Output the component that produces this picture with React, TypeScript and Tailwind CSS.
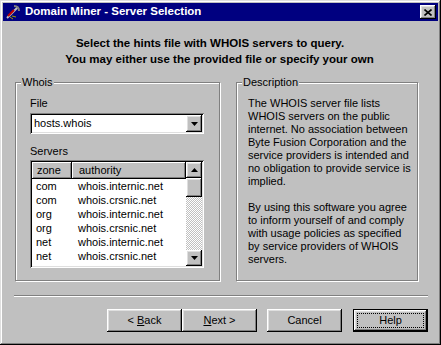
import React from 'react';

const raised =
  'shadow-[inset_-1px_-1px_#000,inset_1px_1px_#fff,inset_-2px_-2px_#808080,inset_2px_2px_#dfdfdf]';
const sunken =
  'shadow-[inset_1px_1px_#808080,inset_-1px_-1px_#fff,inset_2px_2px_#000,inset_-2px_-2px_#dfdfdf]';
const etched = 'border border-[#808080] shadow-[1px_1px_0_#fff,inset_1px_1px_0_#fff]';

const servers = [
  ['com', 'whois.internic.net'],
  ['com', 'whois.crsnic.net'],
  ['org', 'whois.internic.net'],
  ['org', 'whois.crsnic.net'],
  ['net', 'whois.internic.net'],
  ['net', 'whois.crsnic.net'],
  ['edu', 'whois.internic.net'],
];

const Arrow = ({ up }: { up?: boolean }) => (
  <svg width="7" height="4" viewBox="0 0 7 4" className={up ? 'rotate-180' : ''}>
    <path d="M0 0h7L3.5 4z" fill="#000" />
  </svg>
);

const Button = ({ children, isDefault }: { children: React.ReactNode; isDefault?: boolean }) =>
  isDefault ? (
    <div className="w-[75px] h-[23px] border border-black">
      <div className={`w-full h-full p-[3px] bg-[#c0c0c0] ${raised}`}>
        <div className="w-full h-full border border-dotted border-black flex items-center justify-center">
          {children}
        </div>
      </div>
    </div>
  ) : (
    <div className={`w-[75px] h-[23px] bg-[#c0c0c0] flex items-center justify-center ${raised}`}>
      {children}
    </div>
  );

const GroupBox = ({ title, className, children }: { title: string; className: string; children: React.ReactNode }) => (
  <div className={`relative h-[199px] ${etched} ${className}`}>
    <span className="absolute -top-[7px] left-[5px] px-[1px] bg-[#c0c0c0] leading-[13px]">{title}</span>
    {children}
  </div>
);

const App: React.FC = () => {
  return (
    <div className="w-[441px] h-[345px] bg-[#c0c0c0] p-[3px] flex flex-col font-['Liberation_Sans',Arial,sans-serif] text-[11px] text-black shadow-[inset_-1px_-1px_#000,inset_1px_1px_#dfdfdf,inset_-2px_-2px_#808080,inset_2px_2px_#fff] overflow-hidden">
      {/* Title bar */}
      <div className="h-[18px] bg-[#000080] flex items-center pl-[2px] pr-[2px] text-white font-bold text-[11.5px]">
        <svg width="16" height="16" viewBox="0 0 16 16" className="mr-[4px]">
          <path d="M2 14L13 3" stroke="#c0c0c0" strokeWidth="2" />
          <path d="M3 12L9 6" stroke="#c00000" strokeWidth="2" />
          <path d="M9 2c3 0 5 2 5 5" stroke="#808080" strokeWidth="2" fill="none" />
          <path d="M5 13l3 2M7 12l4 1" stroke="#a0a000" strokeWidth="1" />
        </svg>
        <span className="flex-1">Domain Miner - Server Selection</span>
        <div className={`w-[16px] h-[14px] bg-[#c0c0c0] flex items-center justify-center ${raised}`}>
          <svg width="8" height="7" viewBox="0 0 8 7">
            <path d="M0.5 0.5l7 6M7.5 0.5l-7 6" stroke="#000" strokeWidth="1.6" />
          </svg>
        </div>
      </div>

      {/* Header */}
      <div className="mt-[14px] text-center font-bold text-[11.5px] leading-[16px]">
        <div className="pr-[21px]">Select the hints file with WHOIS servers to query.</div>
        <div className="pr-[2px]">You may either use the provided file or specify your own</div>
      </div>

      {/* Groups */}
      <div className="mt-[15px] ml-[12px] flex gap-[16px]">
        <GroupBox title="Whois" className="w-[205px] pt-[14px] pl-[14px]">
          <div className="leading-[13px]">File</div>
          <div className={`mt-[3px] w-[174px] h-[21px] bg-white p-[2px] flex ${sunken}`}>
            <div className="flex-1 pl-[2px] leading-[17px]">hosts.whois</div>
            <div className={`w-[16px] h-[17px] bg-[#c0c0c0] flex items-center justify-center ${raised}`}>
              <Arrow />
            </div>
          </div>
          <div className="mt-[11px] leading-[13px]">Servers</div>
          <div className={`mt-[2px] w-[174px] h-[108px] bg-white p-[2px] flex ${sunken}`}>
            <div className="flex-1 overflow-hidden">
              <div className="flex h-[17px] leading-[17px]">
                <div className="w-[40px] bg-[#c0c0c0] pl-[5px] shadow-[inset_-1px_-1px_#000,inset_1px_1px_#fff,inset_-2px_-2px_#808080]">zone</div>
                <div className="flex-1 bg-[#c0c0c0] pl-[7px] shadow-[inset_-1px_-1px_#000,inset_1px_1px_#fff,inset_-2px_-2px_#808080]">authority</div>
              </div>
              {servers.map(([zone, auth], i) => (
                <div key={i} className="flex h-[14px] leading-[14px]">
                  <div className="w-[42px] pl-[4px]">{zone}</div>
                  <div className="pl-[4px]">{auth}</div>
                </div>
              ))}
            </div>
            <div className="w-[16px] flex flex-col bg-[repeating-conic-gradient(#c0c0c0_0%_25%,#fff_0%_50%)] bg-[length:2px_2px]">
              <div className={`h-[16px] bg-[#c0c0c0] flex items-center justify-center ${raised}`}>
                <Arrow up />
              </div>
              <div className={`h-[19px] bg-[#c0c0c0] ${raised}`} />
              <div className="flex-1" />
              <div className={`h-[16px] bg-[#c0c0c0] flex items-center justify-center ${raised}`}>
                <Arrow />
              </div>
            </div>
          </div>
        </GroupBox>

        <GroupBox title="Description" className="w-[182px] pt-[14px] pl-[11px] leading-[13px]">
          <p>
            The WHOIS server file lists<br />
            WHOIS servers on the public<br />
            internet. No association between<br />
            Byte Fusion Corporation and the<br />
            service providers is intended and<br />
            no obligation to provide service is<br />
            implied.
          </p>
          <p className="mt-[13px]">
            By using this software you agree<br />
            to inform yourself of and comply<br />
            with usage policies as specified<br />
            by service providers of WHOIS<br />
            servers.
          </p>
        </GroupBox>
      </div>

      {/* Separator */}
      <div className="mt-[14px] ml-[11px] w-[414px] h-[2px] border-t border-[#808080] border-b border-b-white" />

      {/* Buttons */}
      <div className="mt-[12px] flex justify-end pr-[10px]">
        <Button>
          &lt; <span className="underline ml-[3px]">B</span>ack
        </Button>
        <Button>
          <span className="underline">N</span>ext &gt;
        </Button>
        <div className="w-[10px]" />
        <Button>Cancel</Button>
        <div className="w-[11px]" />
        <Button isDefault>Help</Button>
      </div>
    </div>
  );
};

export default App;
